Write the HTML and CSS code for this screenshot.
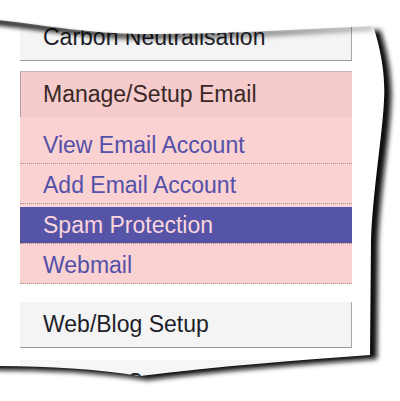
FILE: index.html
```html
<!DOCTYPE html>
<html lang="en">
<head>
  <meta charset="UTF-8">
  <title>Email Menu</title>
  <link rel="stylesheet" href="styles.css">
</head>
<body>
  <div class="menu">
    <div class="block">Carbon Neutralisation</div>

    <div class="section">
      <div class="section-head">Manage/Setup Email</div>
      <ul class="sub">
        <li><a href="#">View Email Account</a></li>
        <li><a href="#">Add Email Account</a></li>
        <li class="active"><a href="#">Spam Protection</a></li>
        <li><a href="#">Webmail</a></li>
      </ul>
    </div>

    <div class="block">Web/Blog Setup</div>
    <div class="block next">Hosting Support</div>
  </div>

  <!-- torn paper edge, drawn over the menu -->
  <svg class="tear" width="400" height="401" viewBox="0 0 400 401">
    <defs>
      <clipPath id="outside">
        <path clip-rule="evenodd" d="M-40,-40 H440 V440 H-40 Z
          M-20,19 C20,20 70,33 140,34 C220,35 300,29 373,26
          C378,40 386,70 384,100 C383,130 373,190 371,240 L370,355
          C300,360 220,366 140,376 C90,368 40,366 -20,366 Z"/>
      </clipPath>
      <clipPath id="inside">
        <path d="M-20,19 C20,20 70,33 140,34 C220,35 300,29 373,26
          C378,40 386,70 384,100 C383,130 373,190 371,240 L370,355
          C300,360 220,366 140,376 C90,368 40,366 -20,366 Z"/>
      </clipPath>
      <filter id="blur" x="-20%" y="-20%" width="140%" height="140%">
        <feGaussianBlur stdDeviation="2.8"/>
      </filter>
      <filter id="soft" x="-20%" y="-50%" width="140%" height="200%">
        <feGaussianBlur stdDeviation="2.2"/>
      </filter>
      <linearGradient id="curl" x1="0" y1="0" x2="1" y2="0">
        <stop offset="0" stop-color="#000" stop-opacity="0.85"/>
        <stop offset="0.4" stop-color="#000" stop-opacity="0.6"/>
        <stop offset="1" stop-color="#000" stop-opacity="0.2"/>
      </linearGradient>
    </defs>

    <rect x="0" y="0" width="400" height="401" fill="#fff" clip-path="url(#outside)"/>
    <g clip-path="url(#outside)">
      <path filter="url(#blur)" fill="#111" transform="translate(7 4)"
        d="M-20,19 C20,20 70,33 140,34 C220,35 300,29 373,26
          C378,40 386,70 384,100 C383,130 373,190 371,240 L370,355
          C300,360 220,366 140,376 C90,368 40,366 -20,366 Z"/>
    </g>
    <g clip-path="url(#inside)">
      <path filter="url(#soft)" fill="none" stroke="url(#curl)" stroke-width="7"
        d="M-20,21 C20,22 70,35 140,36 C220,37 300,31 373,28"/>
    </g>
  </svg>
</body>
</html>
```

FILE: styles.css
```css
body {
  margin: 0;
  background: #fff;
  font-family: Arial, "Liberation Sans", sans-serif;
  font-size: 23px;
  overflow: hidden;
}

.menu {
  width: 332px;
  margin: 15px 0 0 20px;
  display: flex;
  flex-direction: column;
}

.block {
  height: 45px;
  line-height: 45px;
  padding-left: 23px;
  background: #f4f4f4;
  color: #1e1e2a;
  border-right: 1px solid #a8a8a8;
  border-bottom: 1px solid #9a9a9a;
  margin-bottom: 10px;
}

.block.next {
  margin-top: 2px;
  background: #f6f6f6;
}

.section {
  margin-bottom: 18px;
  background: #fad2d2;
}

.section-head {
  height: 45px;
  line-height: 45px;
  padding-left: 22px;
  background: #f5cbcb;
  color: #3a2826;
  border-top: 1px solid #c9b6b6;
  border-left: 1px solid #b89c9c;
}

.sub {
  list-style: none;
  margin: 0;
  padding: 7px 0 0;
}

.sub li {
  padding-top: 3px;
  border-bottom: 1px dotted #b08686;
}

.sub a {
  display: block;
  line-height: 36px;
  padding-left: 23px;
  color: #5450a8;
  text-decoration: none;
}

.sub li.active a {
  background: #5554a7;
  color: #fbd6dc;
}

.tear {
  position: absolute;
  left: 0;
  top: 0;
  pointer-events: none;
}
```
